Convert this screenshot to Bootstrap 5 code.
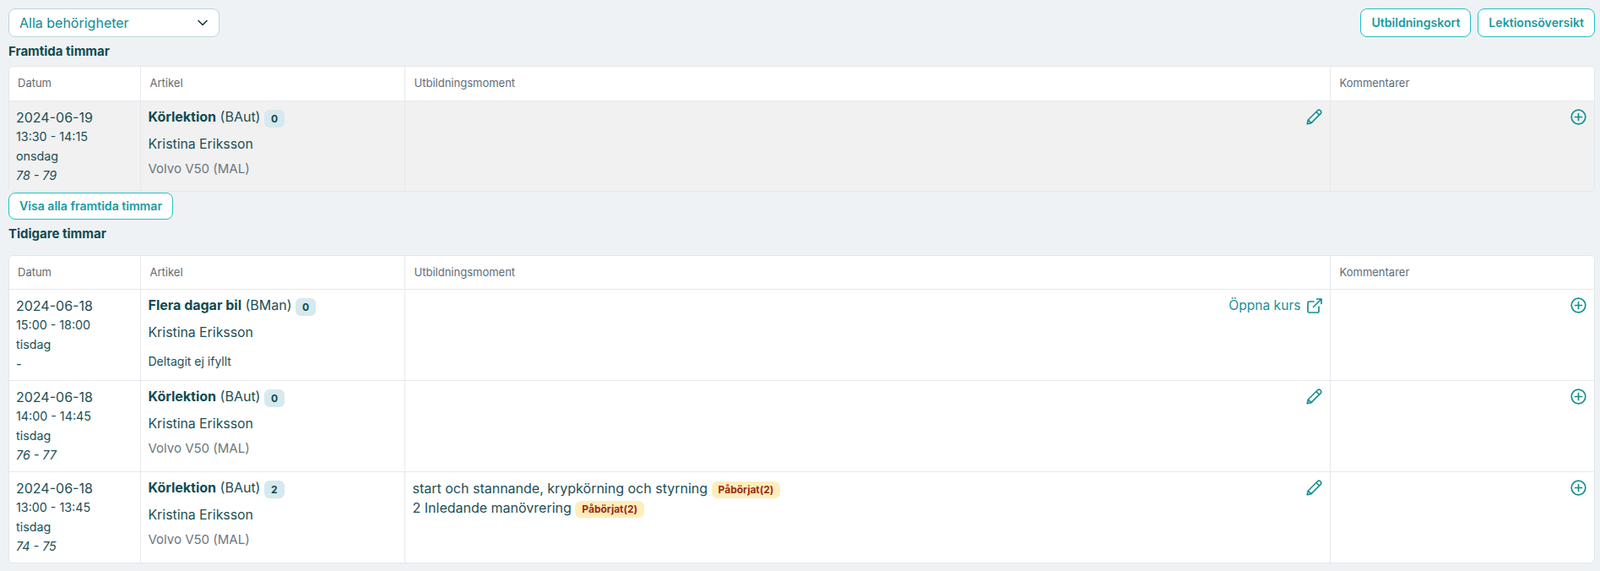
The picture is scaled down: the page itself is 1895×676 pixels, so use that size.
<!DOCTYPE html>
<html lang="sv">
<head>
<meta charset="utf-8">
<title>Timmar</title>
<link href="https://cdn.jsdelivr.net/npm/bootstrap@5.3.0/dist/css/bootstrap.min.css" rel="stylesheet">
<style>
body{background:#eff2f4;font-family:Inter,"Liberation Sans",sans-serif;color:#1d4f55;font-size:16px;overflow:hidden}
.page-wrap{padding:10px 6px 0 10px}
.perm-select{width:250px;height:34px;border:1px solid #b9d6d8;border-radius:8px;background:#fff;color:#128a94;font-size:16px;padding:0 12px;line-height:32px}
.perm-select svg{width:14px;height:14px;color:#0f3a40}
.act-btn{height:34px;border:1px solid #23bfc4;border-radius:8px;background:#fff;color:#1a9ba3;font-size:14.1px;font-weight:600;padding:0 12px;line-height:32px;white-space:nowrap}
.act-btn:hover{background:#fff;color:#1a9ba3;border-color:#23bfc4}
.show-btn{height:32px;line-height:30px;display:inline-block;margin-top:1px}
.sec-title{font-size:15px;font-weight:700;color:#0f4a50;line-height:17px}
.sec-one{margin-top:8px}
.sec-two{margin-top:8px}
.t-wrap{border:1px solid #e3e6ec;border-radius:6px;overflow:hidden;background:#fff}
.t-one{margin-top:9px}
.t-two{margin-top:17px}
.hours{table-layout:fixed;width:100%;margin:0;border-collapse:collapse;--bs-table-bg:transparent;--bs-table-color:#1d4f55}
.hours th,.hours td{border:0;border-left:1px solid #e6e8ee;border-top:1px solid #e6e8ee;padding:0;vertical-align:top}
.hours th:first-child,.hours td:first-child{border-left:0}
.hours thead th{border-top:0;height:40px;font-size:13px;font-weight:400;color:#5f6b75;padding:0 11px;line-height:39px;background:#fff}
.hours thead th:first-child{padding-left:10px}
.t-two thead th{height:39px;line-height:38px}
.hours tbody td{height:108px;padding:8px 9px 0}
.t-one tbody td{height:107px}
.hours tbody td:first-child{padding-left:8px}
.row-muted td{background:#f1f1f1}
.d-date{font-size:16px;line-height:22px}
.d-sub{font-size:14.3px;line-height:23px}
.d-sub-i{font-size:14.3px;line-height:23px;font-style:italic}
.a-name{font-size:16px;line-height:20px;white-space:nowrap}
.a-name b{font-weight:700;color:#0f4a50}
.a-count{display:inline-block;background:#d6e9ee;border-radius:6px;font-size:12px;font-weight:700;padding:0 8px;line-height:21px;height:21px;vertical-align:-1px;color:#0f4a50}
.a-person{font-size:15.8px;line-height:22px;margin-top:9px}
.a-car{font-size:15px;line-height:20px;margin-top:8px;color:#6c7780}
.a-note{font-size:14px;line-height:20px;margin-top:13px}
.m-line{font-size:16px;line-height:23px;white-space:nowrap}
.m-tag{display:inline-block;background:#fdeebc;color:#9c2a12;font-size:12px;font-weight:700;border-radius:7px;padding:0 8px;line-height:20px;height:20px;vertical-align:0}
.ico{color:#13908f;display:block;width:19px;height:19px;flex:none;margin-top:1px}
.open-link{color:#1a8f9c;font-size:15.6px;text-decoration:none;line-height:20px;margin-top:1px}
.open-link svg{width:18px;height:18px;color:#13908f;margin-left:7px}
</style>
</head>
<body>
<div class="page-wrap">
  <div class="d-flex justify-content-between">
    <div class="perm-select d-flex justify-content-between align-items-center">
      <span>Alla behörigheter</span>
      <svg viewBox="0 0 14 14" fill="none" stroke="currentColor" stroke-width="1.6" stroke-linecap="round" stroke-linejoin="round"><path d="M2 4.500 7 9.500 12 4.500"/></svg>
    </div>
    <div class="d-flex gap-2">
      <button type="button" class="btn act-btn py-0">Utbildningskort</button>
      <button type="button" class="btn act-btn py-0">Lektionsöversikt</button>
    </div>
  </div>
  <div class="sec-title sec-one">Framtida timmar</div>
  <div class="t-wrap t-one">
    <table class="table hours">
      <colgroup><col style="width:155px"><col style="width:313px"><col style="width:1096px"><col></colgroup>
      <thead><tr><th>Datum</th><th>Artikel</th><th>Utbildningsmoment</th><th>Kommentarer</th></tr></thead>
      <tbody>
        <tr class="row-muted">
          <td><div class="d-date">2024-06-19</div><div class="d-sub">13:30 - 14:15</div><div class="d-sub">onsdag</div><div class="d-sub-i">78 - 79</div></td>
          <td><div class="a-name"><b>Körlektion</b> (BAut) <span class="a-count">0</span></div><div class="a-person">Kristina Eriksson</div><div class="a-car">Volvo V50 (MAL)</div></td>
          <td><div class="d-flex justify-content-end"><svg class="ico" viewBox="0 0 19 19" fill="none" stroke="currentColor" stroke-width="1.6" stroke-linejoin="round"><path d="M1.200 17.800 2.300 13 13.600 1.800a2.100 2.100 0 0 1 3 0l.6.6a2.100 2.100 0 0 1 0 3L6 16.600ZM2.300 13 6 16.600M12 3.500l3.500 3.500"/></svg></div></td>
          <td><div class="d-flex justify-content-end"><svg class="ico" viewBox="0 0 19 19" fill="none" stroke="currentColor" stroke-width="1.7" stroke-linecap="round"><circle cx="9.500" cy="9.500" r="8.300"/><path d="M9.500 5.500v8M5.500 9.500h8"/></svg></div></td>
        </tr>
      </tbody>
    </table>
  </div>
  <button type="button" class="btn act-btn show-btn py-0">Visa alla framtida timmar</button>
  <div class="sec-title sec-two">Tidigare timmar</div>
  <div class="t-wrap t-two">
    <table class="table hours">
      <colgroup><col style="width:155px"><col style="width:313px"><col style="width:1096px"><col></colgroup>
      <thead><tr><th>Datum</th><th>Artikel</th><th>Utbildningsmoment</th><th>Kommentarer</th></tr></thead>
      <tbody>
        <tr>
          <td><div class="d-date">2024-06-18</div><div class="d-sub">15:00 - 18:00</div><div class="d-sub">tisdag</div><div class="d-sub-i">-</div></td>
          <td><div class="a-name"><b>Flera dagar bil</b> (BMan) <span class="a-count">0</span></div><div class="a-person">Kristina Eriksson</div><div class="a-note">Deltagit ej ifyllt</div></td>
          <td><div class="d-flex justify-content-end"><a class="open-link d-flex align-items-center" href="#">Öppna kurs<svg viewBox="0 0 18 18" fill="none" stroke="currentColor" stroke-width="1.7" stroke-linecap="round" stroke-linejoin="round"><path d="M14 10v5.500a1.500 1.500 0 0 1-1.500 1.500H2.500A1.500 1.500 0 0 1 1 15.500V5.500A1.500 1.500 0 0 1 2.500 4H8M11.500 1H17v5.500M17 1 7.500 10.500"/></svg></a></div></td>
          <td><div class="d-flex justify-content-end"><svg class="ico" viewBox="0 0 19 19" fill="none" stroke="currentColor" stroke-width="1.7" stroke-linecap="round"><circle cx="9.500" cy="9.500" r="8.300"/><path d="M9.500 5.500v8M5.500 9.500h8"/></svg></div></td>
        </tr>
        <tr>
          <td><div class="d-date">2024-06-18</div><div class="d-sub">14:00 - 14:45</div><div class="d-sub">tisdag</div><div class="d-sub-i">76 - 77</div></td>
          <td><div class="a-name"><b>Körlektion</b> (BAut) <span class="a-count">0</span></div><div class="a-person">Kristina Eriksson</div><div class="a-car">Volvo V50 (MAL)</div></td>
          <td><div class="d-flex justify-content-end"><svg class="ico" viewBox="0 0 19 19" fill="none" stroke="currentColor" stroke-width="1.6" stroke-linejoin="round"><path d="M1.200 17.800 2.300 13 13.600 1.800a2.100 2.100 0 0 1 3 0l.6.6a2.100 2.100 0 0 1 0 3L6 16.600ZM2.300 13 6 16.600M12 3.500l3.500 3.500"/></svg></div></td>
          <td><div class="d-flex justify-content-end"><svg class="ico" viewBox="0 0 19 19" fill="none" stroke="currentColor" stroke-width="1.7" stroke-linecap="round"><circle cx="9.500" cy="9.500" r="8.300"/><path d="M9.500 5.500v8M5.500 9.500h8"/></svg></div></td>
        </tr>
        <tr>
          <td><div class="d-date">2024-06-18</div><div class="d-sub">13:00 - 13:45</div><div class="d-sub">tisdag</div><div class="d-sub-i">74 - 75</div></td>
          <td><div class="a-name"><b>Körlektion</b> (BAut) <span class="a-count">2</span></div><div class="a-person">Kristina Eriksson</div><div class="a-car">Volvo V50 (MAL)</div></td>
          <td><div class="d-flex justify-content-between"><div><div class="m-line">start och stannande, krypkörning och styrning <span class="m-tag">Påbörjat(2)</span></div><div class="m-line">2 Inledande manövrering <span class="m-tag">Påbörjat(2)</span></div></div><svg class="ico" viewBox="0 0 19 19" fill="none" stroke="currentColor" stroke-width="1.6" stroke-linejoin="round"><path d="M1.200 17.800 2.300 13 13.600 1.800a2.100 2.100 0 0 1 3 0l.6.6a2.100 2.100 0 0 1 0 3L6 16.600ZM2.300 13 6 16.600M12 3.500l3.500 3.500"/></svg></div></td>
          <td><div class="d-flex justify-content-end"><svg class="ico" viewBox="0 0 19 19" fill="none" stroke="currentColor" stroke-width="1.7" stroke-linecap="round"><circle cx="9.500" cy="9.500" r="8.300"/><path d="M9.500 5.500v8M5.500 9.500h8"/></svg></div></td>
        </tr>
      </tbody>
    </table>
  </div>
</div>
<script src="https://cdn.jsdelivr.net/npm/bootstrap@5.3.0/dist/js/bootstrap.bundle.min.js"></script>
</body>
</html>
